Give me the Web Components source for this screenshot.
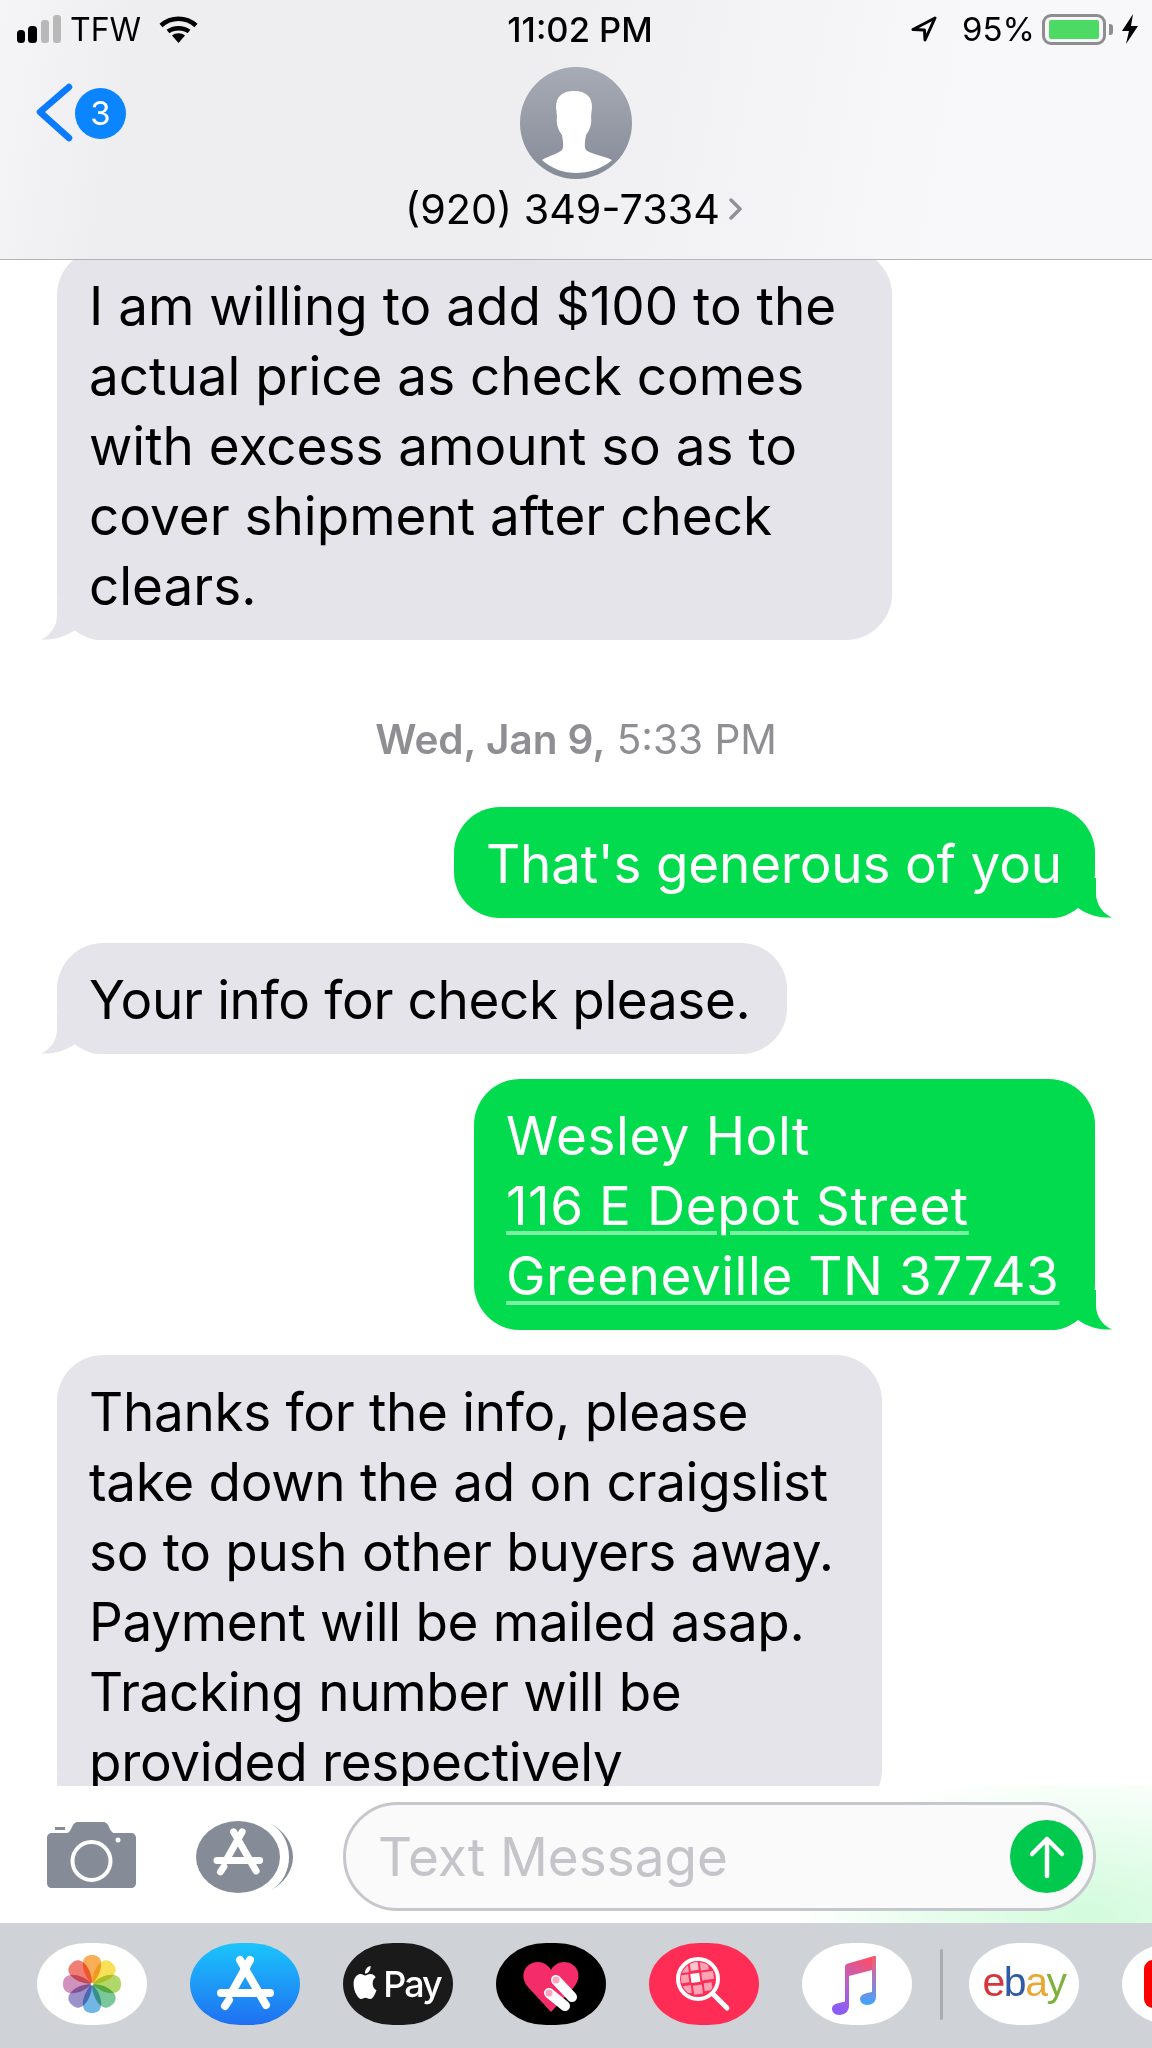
<!DOCTYPE html>
<html lang="en">
<head>
<meta charset="utf-8">
<title>Messages</title>
<style>
  html, body { margin: 0; padding: 0; background: #fff; }
  body { width: 1152px; height: 2048px; overflow: hidden; display: flex; flex-direction: column; font-family: Inter, "Liberation Sans", sans-serif; }
</style>
</head>
<body>
  <sms-header></sms-header>
  <sms-thread>
    <sms-bubble kind="in" style="width:835px;margin-top:-11px">I am willing to add $100 to the
actual price as check comes
with excess amount so as to
cover shipment after check
clears.</sms-bubble>
    <sms-stamp><b>Wed, Jan 9,</b> 5:33 PM</sms-stamp>
    <sms-bubble kind="out" style="width:641px;letter-spacing:-.2px">That's generous of you</sms-bubble>
    <sms-bubble kind="in" style="width:730px;letter-spacing:-.35px">Your info for check please.</sms-bubble>
    <sms-bubble kind="out" style="width:621px;letter-spacing:.55px">Wesley Holt
<a>116 E Depot Street</a>
<a>Greeneville TN 37743</a></sms-bubble>
    <sms-bubble kind="in" style="width:825px;letter-spacing:-.3px">Thanks for the info, please
take down the ad on craigslist
so to push other buyers away.
Payment will be mailed asap.
Tracking number will be
provided respectively</sms-bubble>
  </sms-thread>
  <sms-composer></sms-composer>
  <app-tray>
    <tray-pill bg="#fff" icon="photos"></tray-pill>
    <tray-pill bg="linear-gradient(#1bc5fd,#1f6ff1)" icon="store"></tray-pill>
    <tray-pill bg="#1a1a1a" icon="pay">Pay</tray-pill>
    <tray-pill bg="#000" icon="heart"></tray-pill>
    <tray-pill bg="#ff2d55" icon="search"></tray-pill>
    <tray-pill bg="#fff" icon="music"></tray-pill>
    <tray-divider></tray-divider>
    <tray-pill bg="#fff" icon="ebay"></tray-pill>
    <tray-pill bg="#fff" icon="video"></tray-pill>
  </app-tray>

<script>
// the App Store "A", drawn in a 110x82 box
const storeGlyph = (color) => `
  <g fill="none" stroke="${color}" stroke-width="8" stroke-linecap="round">
    <path d="M50 17 76 62"/>
    <path d="M60 17 42 49"/>
    <path d="M31 50H80"/>
    <path d="M39 57 35 63"/>
  </g>`;

const ICONS = {
  photos: `<svg width="110" height="82" viewBox="0 0 110 82">
    ${['#f9a03a', '#f5dc3c', '#a4d04e', '#63bd88', '#5ba9de', '#8c7ec0', '#c97fb1', '#ef675c'].map((c, i) =>
      `<path d="M55 41C48 34 45 25 46 19 47 14 50 12 55 12 60 12 63 14 64 19 65 25 62 34 55 41Z" fill="${c}" opacity=".85" transform="rotate(${i * 45} 55 41)" style="mix-blend-mode:multiply"/>`).join('')}
    <circle cx="55" cy="41" r="1.500" fill="#fff"/>
  </svg>`,
  store: `<svg width="110" height="82" viewBox="0 0 110 82">${storeGlyph('#fff')}</svg>`,
  pay: `<svg width="28" height="33" viewBox="0 0 24 24" preserveAspectRatio="none" fill="#fff" style="margin:-4px 4px 0 -4px"><path d="M12.152 6.896c-.948 0-2.415-1.078-3.96-1.04-2.04.027-3.91 1.183-4.961 3.014-2.117 3.675-.546 9.103 1.519 12.09 1.013 1.454 2.208 3.09 3.792 3.039 1.52-.065 2.09-.987 3.935-.987 1.831 0 2.35.987 3.96.948 1.637-.026 2.676-1.48 3.676-2.948 1.156-1.688 1.636-3.325 1.662-3.415-.039-.013-3.182-1.221-3.22-4.857-.026-3.04 2.48-4.494 2.597-4.559-1.429-2.09-3.623-2.324-4.39-2.376-2-.156-3.675 1.09-4.61 1.09zM15.53 3.83c.843-1.012 1.4-2.427 1.245-3.83-1.207.052-2.662.805-3.532 1.818-.78.896-1.454 2.338-1.273 3.714 1.338.104 2.715-.688 3.559-1.701"/></svg>`,
  heart: `<svg width="110" height="82" viewBox="0 0 110 82">
    <path d="M55 69 32 44C22 32 30 19 42 19c6 0 11 4 13 8 2-4 7-8 13-8 12 0 20 13 10 25Z" fill="#f52c6a"/>
    <g stroke="#fff" stroke-width="10" stroke-linecap="round"><path d="M60 37 76 54"/><path d="M53 50 69 63"/></g>
    <circle cx="60" cy="37" r="3.5" fill="#fba5c0"/><circle cx="53" cy="50" r="3.5" fill="#fba5c0"/>
  </svg>`,
  search: `<svg width="110" height="82" viewBox="0 0 110 82">
    <defs><clipPath id="lens"><circle cx="49" cy="36" r="17"/></clipPath></defs>
    <g clip-path="url(#lens)">
      <circle cx="49" cy="36" r="17" fill="#ff2d55"/>
      <g fill="#ffa3b5" transform="rotate(-8 49 36)">
        <rect x="33" y="20" width="8" height="8"/><rect x="43" y="18" width="8" height="9" fill="#ffc6d1"/><rect x="53" y="20" width="8" height="8"/>
        <rect x="31" y="30" width="9" height="8"/><rect x="42" y="30" width="9" height="9" fill="#fff"/><rect x="53" y="30" width="12" height="8"/>
        <rect x="33" y="41" width="8" height="8"/><rect x="43" y="42" width="9" height="9"/><rect x="54" y="41" width="8" height="8"/>
      </g>
    </g>
    <circle cx="49" cy="36" r="20" fill="none" stroke="#fff" stroke-width="4"/>
    <path d="M64 51 78 65" stroke="#fff" stroke-width="5" stroke-linecap="round"/>
  </svg>`,
  music: `<svg width="110" height="82" viewBox="0 0 110 82">
    <defs><linearGradient id="note" x1=".7" y1="0" x2=".3" y2="1"><stop offset="0" stop-color="#fa4f68"/><stop offset=".5" stop-color="#bb62c8"/><stop offset="1" stop-color="#8a5cf8"/></linearGradient>
    <linearGradient id="note2" x1="0" y1="0" x2="0" y2="1"><stop offset="0" stop-color="#fa5a6c"/><stop offset=".5" stop-color="#a17bcf"/><stop offset="1" stop-color="#3ba6fd"/></linearGradient></defs>
    <path d="M43 24c0-2 1-3 3-3.500L72 13c1.500-.4 2 .5 2 2V26L47 33V63c0 5-4 9-10 9-4 0-7-3-7-6 0-3 2-5 7-6l6-1.500Z" fill="url(#note)"/>
    <path d="M70 14 74 13.500V54c0 5-4 8-9 8-4 0-7-3-7-6s3-5 7-6l5-1Z" fill="url(#note2)"/>
  </svg>`,
  ebay: `<span class="ebay"><i style="color:#d8343c">e</i><i style="color:#2f5aa8">b</i><i style="color:#e9a734">a</i><i style="color:#7fb13f">y</i></span>`,
  video: `<svg width="110" height="82" viewBox="0 0 110 82"><rect x="22" y="17" width="90" height="48" rx="9" fill="#f00"/></svg>`
};

class SmsHeader extends HTMLElement {
  connectedCallback() {
    this.attachShadow({ mode: 'open' });
    this.shadowRoot.innerHTML = `
      <style>
        :host {
          display: block;
          flex: none;
          height: 259px;
          border-bottom: 1px solid #b4b4b6;
          background: linear-gradient(100deg, #f5f5f7 0, #eeeef0 12%, #eeeef0 45%, #f8f8fa 82%);
          color: #000;
          font-family: Inter, "Liberation Sans", sans-serif;
        }
        .status {
          height: 58px;
          display: grid;
          grid-template-columns: 1fr auto 1fr;
          align-items: center;
          font-size: 32px;
        }
        .left, .right { display: flex; align-items: center; }
        .left { padding-left: 17px; }
        .left svg:first-child { margin-right: 9px; }
        .left svg:last-child { margin-left: 18px; }
        .right { justify-content: flex-end; padding-right: 14px; }
        .right span { font-size: 33px; }
        .time { font-weight: 500; font-size: 34.5px; margin-left: 8px; }
        .battery {
          box-sizing: border-box;
          width: 64px;
          height: 31px;
          margin: 0 3px 0 7px;
          padding: 3px 4px;
          border: 3px solid #8e8e8e;
          border-radius: 9px;
        }
        .battery div { height: 100%; background: #4cd964; border-radius: 2px; }
        .nub { width: 4px; height: 11px; background: #8e8e8e; border-radius: 0 3px 3px 0; margin-right: 9px; }
        .nav {
          display: grid;
          grid-template-columns: 1fr auto 1fr;
          padding-top: 9px;
        }
        .back { display: flex; align-items: center; padding: 16px 0 0 36px; align-self: start; }
        .badge {
          width: 51px;
          height: 51px;
          margin-left: 1px;
          border-radius: 50%;
          background: #0a84ff;
          color: #fff;
          font-size: 33px;
          display: flex;
          align-items: center;
          justify-content: center;
        }
        .who { display: flex; flex-direction: column; align-items: center; }
        .name { display: flex; align-items: center; gap: 9px; font-size: 41.3px; line-height: 50px; margin: 5px 5px 0 0; }
      </style>
      <div class="status">
        <div class="left">
          <svg width="44" height="28" viewBox="0 0 44 28">
            <rect y="15" width="8" height="13" rx="3.500"/><rect x="11" y="11" width="9" height="17" rx="3.500"/>
            <rect x="24" y="5" width="8" height="23" rx="3" fill="#b8b8b8"/><rect x="36" width="8" height="28" rx="3" fill="#b8b8b8"/>
          </svg>
          <span>TFW</span>
          <svg width="39" height="27" viewBox="0 0 37 27">
            <path d="M1 9.500C11 .5 26 .5 36 9.500M8 15.500c5.500-4.500 15.500-4.500 21 0" fill="none" stroke="#000" stroke-width="4.500"/>
            <path d="M18.500 27 12 19.500c3.500-3 9.500-3 13 0Z"/>
          </svg>
        </div>
        <div class="time">11:02 PM</div>
        <div class="right">
          <svg width="26" height="26" viewBox="-1 -1 26 26" style="margin-right:25px"><path d="M23 1 1 12.500 12.500 13 13 23Z" fill="none" stroke="#000" stroke-width="3" stroke-linejoin="round"/></svg>
          <span>95%</span>
          <div class="battery"><div></div></div>
          <div class="nub"></div>
          <svg width="16" height="30" viewBox="0 0 16 30"><path d="M11 0 0 17H7L4 30 16 12H9Z"/></svg>
        </div>
      </div>
      <div class="nav">
        <div class="back">
          <svg width="38" height="60" viewBox="0 0 38 60"><path d="M33 4 4 29 33 55" fill="none" stroke="#0a7aff" stroke-width="6.500" stroke-linecap="round" stroke-linejoin="round"/></svg>
          <div class="badge">3</div>
        </div>
        <div class="who">
          <svg width="112" height="112" viewBox="0 0 112 112">
            <defs><linearGradient id="av" x1="0" y1="0" x2="0" y2="1"><stop offset="0" stop-color="#a7abb5"/><stop offset="1" stop-color="#858b97"/></linearGradient></defs>
            <circle cx="56" cy="56" r="56" fill="url(#av)"/>
            <path d="M22 93C30 88 38 87 42 83 44 80 43 74 42 68 38 63 36 56 37 50L36 40C36 30 42 24 54 24 66 24 72 30 72 40L71 50C72 56 70 63 66 68 65 74 64 80 66 83 70 87 82 88 92 93 82 102 68 106 56 106 44 106 32 102 22 93Z" fill="#fff"/>
          </svg>
          <div class="name">
            <span>(920) 349-7334</span>
            <svg width="13" height="22" viewBox="0 0 13 22"><path d="M2 2 11 11 2 20" fill="none" stroke="#8e9299" stroke-width="3.500" stroke-linecap="round" stroke-linejoin="round"/></svg>
          </div>
        </div>
        <div></div>
      </div>
    `;
  }
}

class SmsThread extends HTMLElement {
  connectedCallback() {
    this.attachShadow({ mode: 'open' });
    this.shadowRoot.innerHTML = `
      <style>
        :host {
          display: flex;
          flex-direction: column;
          gap: 25px;
          flex: none;
          height: 1526px;
          padding: 0 57px;
          box-sizing: border-box;
          overflow: hidden;
          background: #fff;
        }
      </style>
      <slot></slot>
    `;
  }
}

class SmsBubble extends HTMLElement {
  connectedCallback() {
    const out = this.getAttribute('kind') === 'out';
    this.attachShadow({ mode: 'open' });
    this.shadowRoot.innerHTML = `
      <style>
        :host {
          display: block;
          flex: none;
          box-sizing: border-box;
          position: relative;
          padding: 21.5px 0 19.5px 32px;
          border-radius: 46px;
          background: ${out ? '#02db4d' : '#e4e4ea'};
          color: ${out ? '#fff' : '#000'};
          align-self: ${out ? 'flex-end' : 'flex-start'};
          font-family: Inter, "Liberation Sans", sans-serif;
          font-size: 53px;
          line-height: 70px;
        }
        .text { position: relative; z-index: 1; white-space: pre; }
        ::slotted(a) {
          text-decoration: underline 3.5px #7cf0a2;
          text-underline-offset: 6px;
        }
        svg {
          position: absolute;
          bottom: 0;
          ${out ? 'right: -17px; transform: scaleX(-1);' : 'left: -16px;'}
        }
      </style>
      <div class="text"><slot></slot></div>
      <svg width="60" height="40" viewBox="0 0 60 40"><path d="M16 0V15C16 28 8 36 0 39.500 12 40.300 24 37 34 30 42 36 50 40 60 40V0Z" fill="${out ? '#02db4d' : '#e4e4ea'}"/></svg>
    `;
  }
}

class SmsStamp extends HTMLElement {
  connectedCallback() {
    this.attachShadow({ mode: 'open' });
    this.shadowRoot.innerHTML = `
      <style>
        :host {
          display: block;
          flex: none;
          margin: 53px 0 20px;
          text-align: center;
          color: #8e8e93;
          font-family: Inter, "Liberation Sans", sans-serif;
          font-size: 40.5px;
          line-height: 44px;
        }
        ::slotted(b) { font-weight: 600; }
      </style>
      <slot></slot>
    `;
  }
}

class SmsComposer extends HTMLElement {
  connectedCallback() {
    this.attachShadow({ mode: 'open' });
    this.shadowRoot.innerHTML = `
      <style>
        :host {
          display: flex;
          align-items: center;
          flex: none;
          height: 137px;
          box-sizing: border-box;
          padding: 16px 56px 12px 47px;
          background: radial-gradient(ellipse 300px 150px at 1090px 130px, #d2fbdc 0, #e9fdee 55%, #fff 100%);
          font-family: Inter, "Liberation Sans", sans-serif;
        }
        .camera { margin-top: -3px; }
        .apps { margin: 0 50px 0 60px; flex: none; }
        .field {
          flex: 1;
          display: flex;
          align-items: center;
          justify-content: space-between;
          box-sizing: border-box;
          height: 109px;
          padding: 0 10px 0 32px;
          border: 3px solid #c6c7cc;
          border-radius: 55px;
          background: #fafafb;
          color: #c4c4ca;
          font-size: 53px;
        }
        .send {
          width: 73px;
          height: 73px;
          border-radius: 50%;
          background: #00c94d;
          display: flex;
          align-items: center;
          justify-content: center;
        }
        svg { display: block; flex: none; }
      </style>
      <svg class="camera" width="89" height="66" viewBox="0 0 89 66">
        <path d="M5 11H19C22 11 23 9 25 5 26 2 28 0 31 0H56C59 0 61 2 62 5 64 9 65 11 68 11H84C87 11 89 13 89 16V61C89 64 87 66 84 66H5C2 66 0 64 0 61V16C0 13 2 11 5 11Z" fill="#858c98"/>
        <rect x="8" y="5" width="10" height="3" fill="#858c98"/>
        <circle cx="44.500" cy="39" r="19" fill="none" stroke="#fff" stroke-width="4"/>
        <circle cx="71" cy="18" r="2.500" fill="#fff"/>
      </svg>
      <svg class="apps" width="97" height="72" viewBox="0 0 97 72">
        <ellipse cx="42" cy="36" rx="42" ry="36" fill="#858c98"/>
        <path d="M74 2C88 10 97 22 97 36 97 50 88 62 74 70 87 62 93 50 93 36 93 22 87 10 74 2Z" fill="#858c98"/>
        <g transform="translate(-6 -4) scale(.87)">${storeGlyph('#fff')}</g>
      </svg>
      <div class="field">
        <span>Text Message</span>
        <div class="send">
          <svg width="40" height="46" viewBox="0 0 40 46"><path d="M20 42V5M5 20 20 5 35 20" fill="none" stroke="#fff" stroke-width="4.500" stroke-linecap="round" stroke-linejoin="round"/></svg>
        </div>
      </div>
    `;
  }
}

class AppTray extends HTMLElement {
  connectedCallback() {
    this.attachShadow({ mode: 'open' });
    this.shadowRoot.innerHTML = `
      <style>
        :host {
          display: flex;
          align-items: flex-start;
          gap: 43px;
          flex: none;
          height: 125px;
          box-sizing: border-box;
          padding: 20px 0 0 37px;
          overflow: hidden;
          background: #cfd2d7;
        }
      </style>
      <slot></slot>
    `;
  }
}

class TrayPill extends HTMLElement {
  connectedCallback() {
    this.attachShadow({ mode: 'open' });
    this.shadowRoot.innerHTML = `
      <style>
        :host {
          display: flex;
          align-items: center;
          justify-content: center;
          flex: none;
          width: 110px;
          height: 82px;
          border-radius: 50px / 41px;
          overflow: hidden;
          background: ${this.getAttribute('bg')};
          color: #fff;
          font-family: Inter, "Liberation Sans", sans-serif;
          font-size: 36px;
          font-weight: 500;
          letter-spacing: -2px;
        }
        .ebay { font-family: "Liberation Sans", sans-serif; font-size: 41px; letter-spacing: -1.5px; padding-bottom: 4px; }
        .ebay i { font-style: normal; }
        svg { display: block; flex: none; }
      </style>
      ${ICONS[this.getAttribute('icon')]}<slot></slot>
    `;
  }
}

class TrayDivider extends HTMLElement {
  connectedCallback() {
    this.attachShadow({ mode: 'open' });
    this.shadowRoot.innerHTML = `
      <style>
        :host {
          display: block;
          flex: none;
          width: 3px;
          height: 71px;
          margin: 6px -17px 0 -15px;
          border-radius: 2px;
          background: #a9adb3;
        }
      </style>
    `;
  }
}

customElements.define('sms-header', SmsHeader);
customElements.define('sms-thread', SmsThread);
customElements.define('sms-bubble', SmsBubble);
customElements.define('sms-stamp', SmsStamp);
customElements.define('sms-composer', SmsComposer);
customElements.define('app-tray', AppTray);
customElements.define('tray-pill', TrayPill);
customElements.define('tray-divider', TrayDivider);
</script>
</body>
</html>
